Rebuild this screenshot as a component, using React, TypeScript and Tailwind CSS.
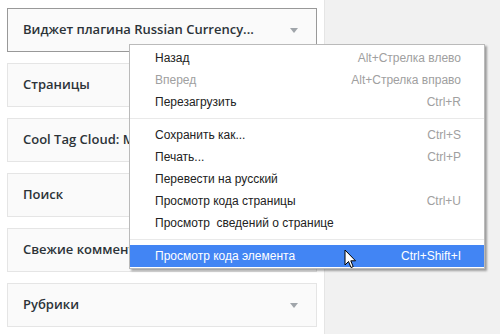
import React from "react";

const widgets = [
  "Виджет плагина Russian Currency...",
  "Страницы",
  "Cool Tag Cloud: Метки",
  "Поиск",
  "Свежие комментарии",
  "Рубрики",
];

type Item =
  | { sep: true }
  | { sep?: false; label: string; shortcut?: string; disabled?: boolean; active?: boolean };

const items: Item[] = [
  { label: "Назад", shortcut: "Alt+Стрелка влево" },
  { label: "Вперед", shortcut: "Alt+Стрелка вправо", disabled: true },
  { label: "Перезагрузить", shortcut: "Ctrl+R" },
  { sep: true },
  { label: "Сохранить как...", shortcut: "Ctrl+S" },
  { label: "Печать...", shortcut: "Ctrl+P" },
  { label: "Перевести на русский" },
  { label: "Просмотр кода страницы", shortcut: "Ctrl+U" },
  { label: "Просмотр\u00a0 сведений о странице" },
  { sep: true },
  { label: "Просмотр кода элемента", shortcut: "Ctrl+Shift+I", active: true },
];

function Arrow() {
  return (
    <svg width="8" height="5" viewBox="0 0 8 5" className="shrink-0">
      <path d="M0 0 H8 L4 5 Z" fill="#a0a5aa" />
    </svg>
  );
}

export default function App() {
  return (
    <div className="relative w-[500px] h-[334px] overflow-hidden bg-[#f1f1f1] flex">
      <div className="w-[325px] h-full bg-white border-r border-[#e5e5e5] pl-[7px] pt-[8px] flex flex-col gap-[11px]">
        {widgets.map((w, i) => (
          <div
            key={i}
            className={`w-[310px] h-[44px] shrink-0 flex items-center justify-between pl-[15px] pr-[18px] bg-[#fafafa] border ${
              i === 0 ? "border-[#999999]" : "border-[#e5e5e5]"
            }`}
          >
            <span
              className="text-[13px] font-semibold text-[#2c3338] whitespace-nowrap overflow-hidden"
              style={{ fontFamily: '"Open Sans", sans-serif' }}
            >
              {w}
            </span>
            <Arrow />
          </div>
        ))}
      </div>

      <div
        className="absolute left-[129px] top-[44px] w-[356px] bg-white border border-[#bababa] pt-[2px] pb-[1px] shadow-[2px_2px_2px_rgba(0,0,0,0.35)] text-[12px]"
        style={{ fontFamily: '"Liberation Sans", Arial, sans-serif' }}
      >
        {items.map((it, i) =>
          it.sep ? (
            <div key={i} className="h-[11px] pt-[5px]">
              <div className="h-px bg-[#e9e9e9]" />
            </div>
          ) : (
            <div
              key={i}
              className={`h-[22px] flex items-center justify-between pl-[25px] pr-[23px] ${
                it.active ? "bg-[#4285f4] text-white" : it.disabled ? "text-[#a0a0a0]" : "text-[#222222]"
              }`}
            >
              <span className="whitespace-pre">{it.label}</span>
              {it.shortcut && (
                <span className={it.active ? "text-white" : "text-[#a0a0a0]"}>{it.shortcut}</span>
              )}
            </div>
          )
        )}
      </div>

      <svg
        className="absolute left-[344px] top-[249px]"
        width="13"
        height="20"
        viewBox="0 0 13 20"
      >
        <path
          d="M1 1 L1 16 L4.5 12.5 L7 18.5 L9.2 17.6 L6.8 11.8 L11.5 11.8 Z"
          fill="#ffffff"
          stroke="#000000"
          strokeWidth="1"
          strokeLinejoin="miter"
        />
      </svg>
    </div>
  );
}
